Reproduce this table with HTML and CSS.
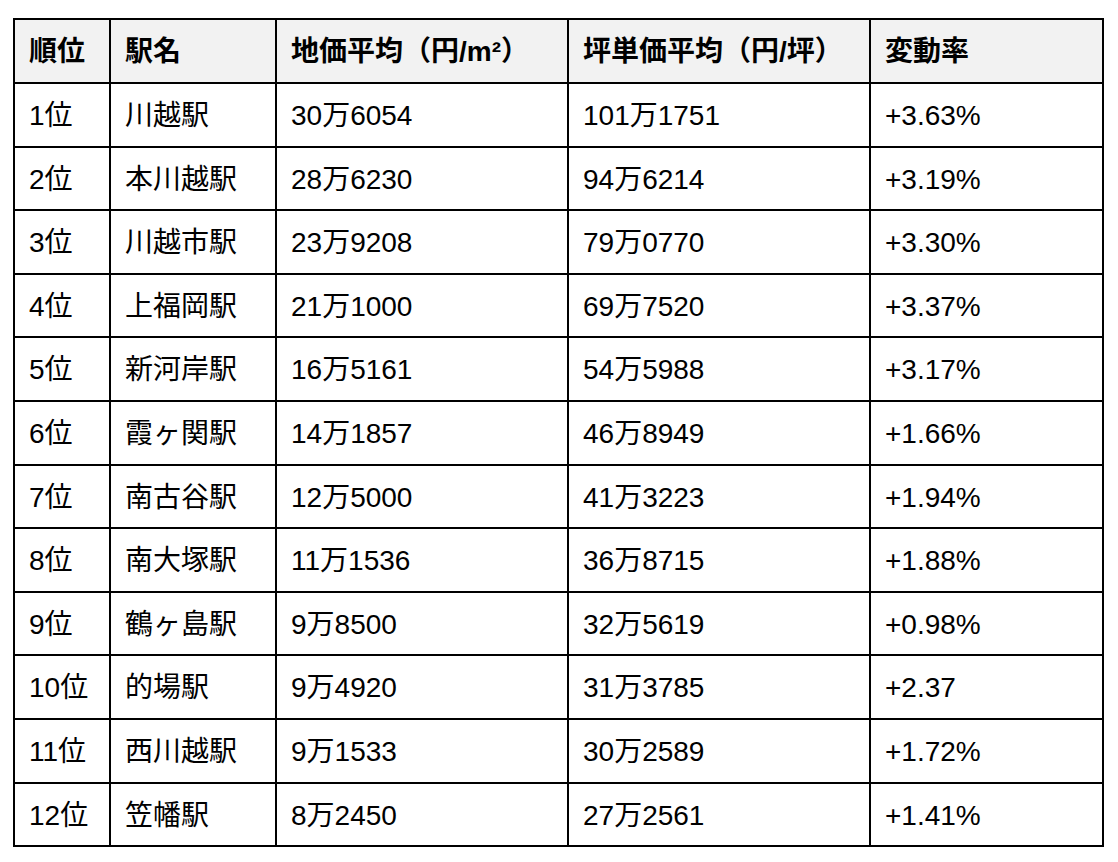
FILE: index.html
```html
<!DOCTYPE html>
<html lang="ja">
<head>
<meta charset="utf-8">
<title>駅別地価ランキング</title>
<link rel="stylesheet" href="styles.css">
</head>
<body>
<table class="ranking">
  <colgroup>
    <col class="c-rank">
    <col class="c-name">
    <col class="c-price">
    <col class="c-tsubo">
    <col class="c-rate">
  </colgroup>
  <thead>
    <tr><th>順位</th><th>駅名</th><th>地価平均（円/m²）</th><th>坪単価平均（円/坪）</th><th>変動率</th></tr>
  </thead>
  <tbody>
    <tr><td>1位</td><td>川越駅</td><td>30万6054</td><td>101万1751</td><td>+3.63%</td></tr>
    <tr><td>2位</td><td>本川越駅</td><td>28万6230</td><td>94万6214</td><td>+3.19%</td></tr>
    <tr><td>3位</td><td>川越市駅</td><td>23万9208</td><td>79万0770</td><td>+3.30%</td></tr>
    <tr><td>4位</td><td>上福岡駅</td><td>21万1000</td><td>69万7520</td><td>+3.37%</td></tr>
    <tr><td>5位</td><td>新河岸駅</td><td>16万5161</td><td>54万5988</td><td>+3.17%</td></tr>
    <tr><td>6位</td><td>霞ヶ関駅</td><td>14万1857</td><td>46万8949</td><td>+1.66%</td></tr>
    <tr><td>7位</td><td>南古谷駅</td><td>12万5000</td><td>41万3223</td><td>+1.94%</td></tr>
    <tr><td>8位</td><td>南大塚駅</td><td>11万1536</td><td>36万8715</td><td>+1.88%</td></tr>
    <tr><td>9位</td><td>鶴ヶ島駅</td><td>9万8500</td><td>32万5619</td><td>+0.98%</td></tr>
    <tr><td>10位</td><td>的場駅</td><td>9万4920</td><td>31万3785</td><td>+2.37</td></tr>
    <tr><td>11位</td><td>西川越駅</td><td>9万1533</td><td>30万2589</td><td>+1.72%</td></tr>
    <tr><td>12位</td><td>笠幡駅</td><td>8万2450</td><td>27万2561</td><td>+1.41%</td></tr>
  </tbody>
</table>
</body>
</html>
```
FILE: styles.css
```css
html, body {
  margin: 0;
  padding: 0;
  background: #ffffff;
}

body {
  padding: 18px 0 0 13px;
  font-family: "Liberation Sans", "Noto Sans CJK JP", sans-serif;
  color: #000000;
}

.ranking {
  border-collapse: separate;
  border-spacing: 0;
  table-layout: fixed;
  width: 1091px;
  border-left: 2px solid #000;
  border-top: 2px solid #000;
  font-size: 28px;
  line-height: 37.6px;
}

.c-rank { width: 96px; }
.c-name { width: 166px; }
.c-price { width: 292px; }
.c-tsubo { width: 302px; }
.c-rate { width: 233px; }

.ranking th,
.ranking td {
  box-sizing: border-box;
  padding: 13px 10px 11px 14px;
  border-right: 2px solid #000;
  border-bottom: 2px solid #000;
  text-align: left;
  vertical-align: middle;
  white-space: nowrap;
}

.ranking th {
  background: #f2f2f2;
  font-weight: bold;
  height: 64px;
}
```
